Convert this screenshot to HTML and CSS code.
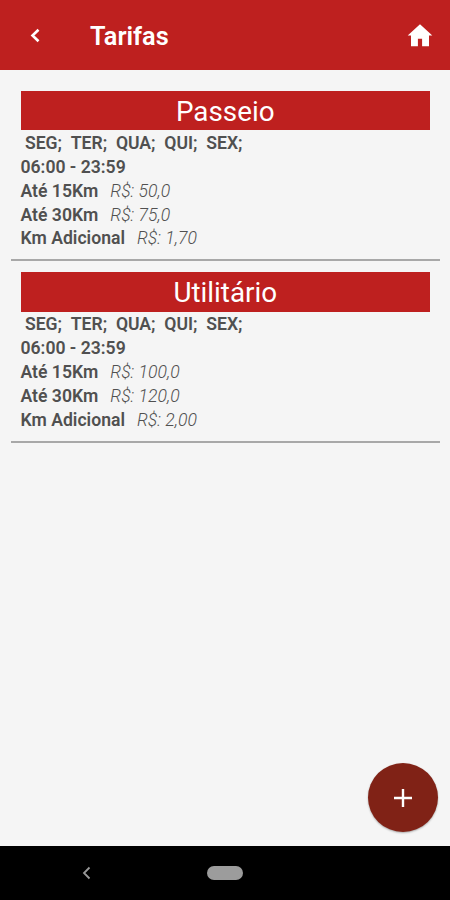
FILE: index.html
```
<!DOCTYPE html>
<html lang="pt-BR">
<head>
    <meta charset="UTF-8">
    <meta name="viewport" content="width=device-width, initial-scale=1.0">
    <title>Tarifas</title>
    <link rel="stylesheet" href="styles.css">
</head>
<body>
    <header class="header">
        <a href="#" class="back" aria-label="Voltar">
            <svg width="10" height="16" viewBox="0 0 10 16"><path d="M8.5 1.7L2.5 7.5l6 5.8" /></svg>
        </a>
        <h1>Tarifas</h1>
        <a href="#" class="home" aria-label="Início">
            <svg width="26" height="24" viewBox="0 0 26 24"><path d="M13 0.3L0.7 11.6H4V22.2h6.9v-7.5h4.2v7.5H22V11.6h3.3z" /></svg>
        </a>
    </header>

    <main class="content">
        <section class="tarifa">
            <h2>Passeio</h2>
            <p class="dias"><span>SEG;</span><span>TER;</span><span>QUA;</span><span>QUI;</span><span>SEX;</span></p>
            <p>06:00 - 23:59</p>
            <p>Até 15Km<span class="valor">R$: 50,0</span></p>
            <p>Até 30Km<span class="valor">R$: 75,0</span></p>
            <p>Km Adicional<span class="valor">R$: 1,70</span></p>
        </section>

        <section class="tarifa">
            <h2>Utilitário</h2>
            <p class="dias"><span>SEG;</span><span>TER;</span><span>QUA;</span><span>QUI;</span><span>SEX;</span></p>
            <p>06:00 - 23:59</p>
            <p>Até 15Km<span class="valor">R$: 100,0</span></p>
            <p>Até 30Km<span class="valor">R$: 120,0</span></p>
            <p>Km Adicional<span class="valor">R$: 2,00</span></p>
        </section>
    </main>

    <!-- botão flutuante -->
    <button class="add" aria-label="Adicionar">
        <svg width="18" height="18" viewBox="0 0 18 18"><path d="M9 0v18M0 9h18" /></svg>
    </button>

    <!-- barra de navegação -->
    <nav class="navbar">
        <svg class="nav-back" width="9" height="14" viewBox="0 0 9 14"><path d="M7.5 1.5L2 7l5.5 5.5" /></svg>
        <span class="nav-pill"></span>
    </nav>
</body>
</html>
```
FILE: styles.css
```
* {
    margin: 0;
    padding: 0;
    box-sizing: border-box;
}

body {
    height: 900px;
    display: flex;
    flex-direction: column;
    background: #f5f5f5;
    color: #505050;
    font-family: Roboto, sans-serif;
    overflow: hidden;
}

svg {
    display: block;
    fill: none;
}

.header {
    height: 70px;
    flex-shrink: 0;
    display: flex;
    align-items: center;
    padding: 1px 17px 0 30px;
    background: #be201f;
    color: #fff;
}

.header h1 {
    flex: 1;
    margin-left: 50px;
    padding-top: 2px;
    font-size: 25.3px;
    font-weight: 600;
}

.back svg {
    stroke: #fff;
    stroke-width: 2.6;
}

.home svg {
    fill: #fff;
}

.content {
    flex: 1;
    padding: 10px 10px 0 11px;
}

.tarifa {
    height: 181.3px;
    padding: 10.6px 10px 0 9.5px;
    border-bottom: 2px solid #a8a8a8;
}

.tarifa h2 {
    height: 39.7px;
    margin-bottom: 1.9px;
    background: #be201f;
    color: #fff;
    font-size: 27.8px;
    font-weight: 400;
    line-height: 42px;
    text-align: center;
}

.tarifa p {
    font-size: 17.6px;
    font-weight: 600;
    line-height: 23.8px;
    white-space: nowrap;
}

.dias span {
    margin: 0 4.4px;
}

.valor {
    margin-left: 12px;
    font-style: italic;
    font-weight: 300;
}

.add {
    position: absolute;
    right: 12px;
    bottom: 68px;
    width: 70px;
    height: 69px;
    display: flex;
    align-items: center;
    justify-content: center;
    background: #802216;
    border: none;
    border-radius: 50%;
    box-shadow: 0 1px 2px rgba(0, 0, 0, 0.3);
}

.add svg {
    stroke: #fff;
    stroke-width: 2.4;
}

.navbar {
    height: 54px;
    flex-shrink: 0;
    display: flex;
    align-items: center;
    padding-left: 82px;
    background: #000;
}

.nav-back {
    stroke: #999;
    stroke-width: 1.8;
}

.nav-pill {
    width: 36px;
    height: 14px;
    margin-left: 116px;
    border-radius: 7px;
    background: #9c9c9c;
}
```
